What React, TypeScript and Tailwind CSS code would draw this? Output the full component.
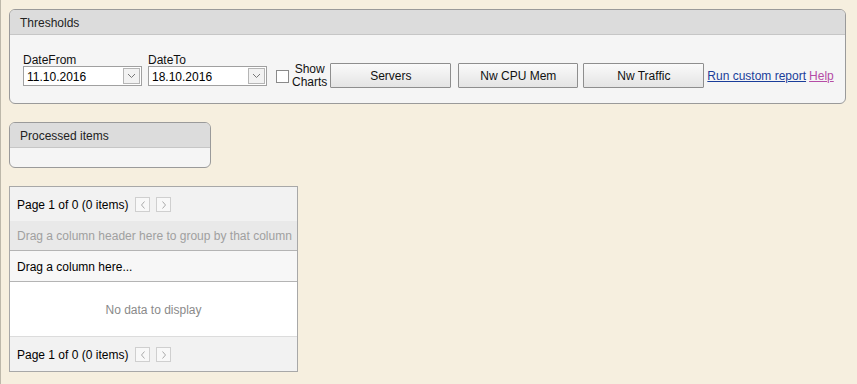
const FONT = "font-['Liberation_Sans',Arial,sans-serif]";

function DateBox({ label, value }: { label: string; value: string }) {
  return (
    <div className="flex flex-col">
      <span className="text-[12px] leading-[14px] text-[#111] h-[14px]">{label}</span>
      <div className="mt-[-1px] w-[119px] h-[20px] border border-[#a0a0a0] bg-white flex items-center justify-between">
        <span className="pl-[3px] pt-[1px] text-[12px] text-black">{value}</span>
        <div className="w-[17px] h-[16px] mr-[1px] border border-[#b5b5b5] bg-[#f2f2f2] flex items-center justify-center">
          <svg width="9" height="6" viewBox="0 0 9 6">
            <path d="M1 1 L4.5 4.5 L8 1" fill="none" stroke="#777" strokeWidth="1" />
          </svg>
        </div>
      </div>
    </div>
  );
}

function Btn({ children, w }: { children: string; w: string }) {
  return (
    <button className={`${w} h-[25px] pt-[1px] border border-[#8e8e8e] bg-gradient-to-b from-[#fafafa] to-[#e4e4e4] text-[12px] font-normal text-[#111] rounded-[1px]`}>
      {children}
    </button>
  );
}

function Pager() {
  return (
    <div className="h-[34px] pt-[1px] bg-[#f2f2f2] flex items-center pl-[7px] gap-[7px] text-[12px] text-black">
      <span>Page 1 of 0 (0 items)</span>
      <div className="flex gap-[6px]">
        <div className="w-[15px] h-[15px] border border-[#cfcfcf] bg-[#f8f8f8] flex items-center justify-center">
          <svg width="6" height="8" viewBox="0 0 6 8"><path d="M4.5 0.5 L1.5 4 L4.5 7.5" fill="none" stroke="#aaa" /></svg>
        </div>
        <div className="w-[15px] h-[15px] border border-[#cfcfcf] bg-[#f8f8f8] flex items-center justify-center">
          <svg width="6" height="8" viewBox="0 0 6 8"><path d="M1.5 0.5 L4.5 4 L1.5 7.5" fill="none" stroke="#aaa" /></svg>
        </div>
      </div>
    </div>
  );
}

export default function App() {
  return (
    <div className={`${FONT} w-[857px] h-[384px] bg-[#f6efdf] border-l border-[#bdb8aa] pl-[8px] pt-[9px] overflow-hidden`}>
      <div className="w-[837px] h-[95px] border border-[#9a9a9a] rounded-[6px] bg-[#f5f5f5] overflow-hidden">
        <div className="h-[25px] pt-[2px] bg-[#dcdcdc] border-b border-[#c6c6c6] flex items-center pl-[10px] text-[12px] text-[#222]">
          Thresholds
        </div>
        <div className="flex items-end pl-[13px] pt-[18px]">
          <DateBox label="DateFrom" value="11.10.2016" />
          <div className="w-[6px]" />
          <DateBox label="DateTo" value="18.10.2016" />
          <div className="flex items-center ml-[9px] mb-[-3px]">
            <div className="w-[13px] h-[13px] border border-[#8a8a8a] bg-white" />
            <span className="ml-[3px] text-[12px] leading-[13px] text-center text-[#111]">Show<br />Charts</span>
          </div>
          <div className="flex ml-[3px] mb-[-2px] items-center">
            <Btn w="w-[121px]">Servers</Btn>
            <div className="w-[7px]" />
            <Btn w="w-[120px]">Nw CPU Mem</Btn>
            <div className="w-[5px]" />
            <Btn w="w-[121px]">Nw Traffic</Btn>
            <a className="ml-[3px] pt-[1px] text-[12px] text-[#1a3d9a] underline">Run custom report</a>
            <a className="ml-[3px] pt-[1px] text-[12px] text-[#b44ca6] underline">Help</a>
          </div>
        </div>
      </div>

      <div className="mt-[18px] w-[202px] h-[46px] border border-[#9a9a9a] rounded-[6px] bg-[#f5f5f5] overflow-hidden">
        <div className="h-[25px] pt-[2px] bg-[#dcdcdc] border-b border-[#c6c6c6] flex items-center pl-[10px] text-[12px] text-[#222]">
          Processed items
        </div>
      </div>

      <div className="mt-[18px] w-[289px] border border-[#a8a8a8] bg-white flex flex-col">
        <Pager />
        <div className="h-[30px] pt-[1px] bg-[#e9e9e9] border-b border-[#b4b4b4] flex items-center pl-[7px] text-[12px] text-[#a0a0a0] whitespace-nowrap">
          Drag a column header here to group by that column
        </div>
        <div className="h-[31px] pt-[1px] bg-[#f7f7f7] border-b border-[#b4b4b4] flex items-center pl-[7px] text-[12px] text-black">
          Drag a column here...
        </div>
        <div className="h-[55px] pt-[1px] bg-white border-b border-[#dcdcdc] flex items-center justify-center text-[12px] text-[#8a8a8a]">
          No data to display
        </div>
        <Pager />
      </div>
    </div>
  );
}
